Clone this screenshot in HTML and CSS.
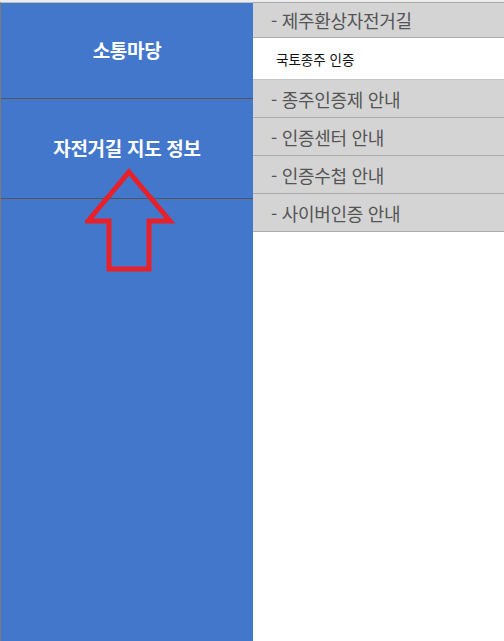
FILE: index.html
```html
<!doctype html>
<html lang="ko">
  <head>
    <meta charset="UTF-8" />
    <meta name="viewport" content="width=device-width, initial-scale=1.0" />
    <title>자전거길 지도 정보</title>
    <link rel="stylesheet" href="styles.css">
  </head>
  <body>
    <div class="page">
      <nav class="side-menu">
        <div class="side-item">소통마당</div>
        <div class="side-item">자전거길 지도 정보</div>
        <div class="side-item side-rest"></div>

        <svg class="pointer-arrow" viewBox="0 0 100 110">
          <polygon
            points="44,4 85,53 64,53 64,101 24,101 24,53 3,53"
            fill="none"
            stroke="#e8202a"
            stroke-width="5"
          ></polygon>
        </svg>
      </nav>

      <ul class="sub-menu">
        <li class="sub-item">- 제주환상자전거길</li>
        <li class="sub-item active">국토종주 인증</li>
        <li class="sub-item">- 종주인증제 안내</li>
        <li class="sub-item">- 인증센터 안내</li>
        <li class="sub-item">- 인증수첩 안내</li>
        <li class="sub-item">- 사이버인증 안내</li>
      </ul>
    </div>
  </body>
</html>
```

FILE: styles.css
```css
* {
  margin: 0;
  padding: 0;
  box-sizing: border-box;
}

body {
  font-family: "Noto Sans CJK KR", "Noto Sans", sans-serif;
  background: #ffffff;
  min-height: 100vh;
}

.page {
  display: flex;
  align-items: flex-start;
  min-height: 100vh;
  border-top: 2px solid #ececec;
}

.side-menu {
  position: relative;
  width: 253px;
  min-height: calc(100vh - 2px);
  display: flex;
  flex-direction: column;
  background: #4277cc;
  border-left: 1px solid #7a7a7a;
  border-top: 1px solid #bdbdbd;
}

.side-item {
  display: flex;
  align-items: center;
  justify-content: center;
  height: 96px;
  color: #ffffff;
  font-size: 19px;
  font-weight: 700;
  letter-spacing: -0.3px;
  border-bottom: 1px solid #555555;
  padding-bottom: 2px;
}

.side-item + .side-item {
  height: 100px;
}

.side-rest {
  flex: 1;
  border-bottom: none;
}

.pointer-arrow {
  position: absolute;
  left: 84px;
  top: 165px;
  width: 100px;
  height: 110px;
}

.sub-menu {
  list-style: none;
  flex: 1;
  border-top: 1px solid #a8a8a8;
}

.sub-item {
  height: 38px;
  padding-left: 18px;
  display: flex;
  align-items: center;
  background: #d4d4d4;
  color: #555555;
  font-size: 18px;
  letter-spacing: -0.3px;
  border-bottom: 1px solid #ababab;
}

.sub-item:first-child {
  height: 35px;
}

.sub-item.active {
  height: 42px;
  padding-left: 23px;
  background: #ffffff;
  color: #111111;
  font-size: 13.5px;
  letter-spacing: 0;
  border-bottom: 1px solid #c4c4c4;
}
```
